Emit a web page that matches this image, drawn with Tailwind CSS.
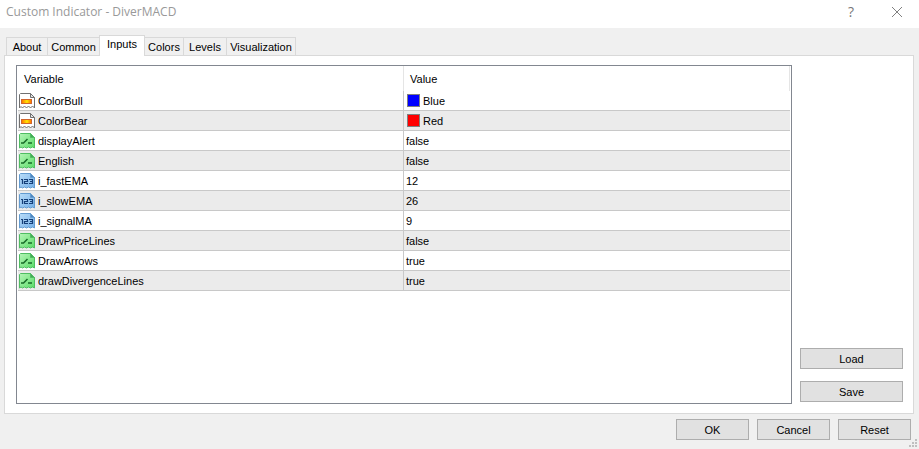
<!-- Custom Indicator dialog -->
<!DOCTYPE html>
<html lang="en">
  <head>
    <meta charset="UTF-8" />
    <meta name="viewport" content="width=device-width, initial-scale=1.0" />
    <script src="https://cdn.jsdelivr.net/npm/@tailwindcss/browser@4"></script>
    <title>Custom Indicator - DiverMACD</title>
  </head>
  <body
    class="min-h-screen flex flex-col bg-[#f0f0f0] text-black text-[11px] leading-4 font-['Liberation_Sans',Arial,sans-serif]"
  >
    <!-- Icon symbols -->
    <svg class="absolute w-0 h-0" aria-hidden="true">
      <defs>
        <linearGradient id="gold">
          <stop offset="0" stop-color="#ff7800" />
          <stop offset="0.55" stop-color="#ffe800" />
          <stop offset="1" stop-color="#ff7800" />
        </linearGradient>
        <linearGradient id="green" x2="1" y2="1">
          <stop offset="0" stop-color="#b5f5b8" />
          <stop offset="1" stop-color="#5cdc68" />
        </linearGradient>
        <linearGradient id="blue" x2="1" y2="1">
          <stop offset="0" stop-color="#b9dcf8" />
          <stop offset="1" stop-color="#75b0e8" />
        </linearGradient>
      </defs>
      <symbol id="icon-color" viewBox="0 0 16 16">
        <path d="M.5 15V1.500L1.500.5H11.500L15.500 4.500V15L13.500 13L11.500 15L9.500 13L7.500 15L5.500 13L3.500 15L2 13.500Z" fill="#fff" stroke="#707070" />
        <path d="M11.500.5V4.500H15.500Z" fill="#e4e4e4" stroke="#707070" />
        <path d="M2 6H13V11H2Z" fill="#d0642c" />
        <path d="M3 7H12V10H3Z" fill="url(#gold)" />
      </symbol>
      <symbol id="icon-bool" viewBox="0 0 16 16">
        <path d="M.5 15V1.500L1.500.5H11.500L15.500 4.500V15L13.500 14L11.500 15L9.500 14L7.500 15L5.500 14L3.500 15L2 14Z" fill="url(#green)" stroke="#4fbd62" />
        <path d="M11.500.5V4.500H15.500Z" fill="#45a858" stroke="#4fbd62" />
        <path d="M2 10H4.500L8.500 6M9 10H13" fill="none" stroke="#176b28" stroke-width="1.500" />
      </symbol>
      <symbol id="icon-int" viewBox="0 0 16 16">
        <path d="M.5 15V1.500L1.500.5H11.500L15.500 4.500V15L13.500 14L11.500 15L9.500 14L7.500 15L5.500 14L3.500 15L2 14Z" fill="url(#blue)" stroke="#629bd0" />
        <path d="M11.500.5V4.500H15.500Z" fill="#4f86bd" stroke="#629bd0" />
        <path d="M2 6.500H3.500V11M5 6.500H8.500V8.500H5.500V10.500H9M10 6.500H13.500V10.500H10M11 8.500H13.500" fill="none" stroke="#153f78" stroke-width="1.200" />
      </symbol>
    </svg>

    <!-- Title Bar -->
    <header class="h-7 bg-white flex items-center justify-between pl-[6px] pr-4 text-[#999999]">
      <h1 class="text-xs font-['Open_Sans','Segoe_UI',sans-serif] pb-1">Custom Indicator - DiverMACD</h1>
      <div class="flex items-center gap-9 pb-1">
        <button aria-label="Help" class="w-2 text-sm text-[#777777] font-['Open_Sans',sans-serif]">?</button>
        <button aria-label="Close">
          <svg class="w-3 h-3" viewBox="0 0 12 12" fill="none" stroke="#808080">
            <path d="M1 1L11 11M11 1L1 11" />
          </svg>
        </button>
      </div>
    </header>

    <main class="grow flex flex-col pl-1 pr-[5px] pt-[7px]">
      <!-- Tabs -->
      <div role="tablist" class="flex items-end pl-[2px] relative">
        <button role="tab" class="w-[42px] h-[18px] border border-b-0 border-[#d9d9d9]">About</button>
        <button role="tab" class="w-[51px] h-[18px] border-t border-[#d9d9d9]">Common</button>
        <button role="tab" aria-selected="true" class="w-[46px] h-[21px] -mb-px pb-1 border border-b-0 border-[#d9d9d9] bg-white">Inputs</button>
        <button role="tab" class="w-[39px] h-[18px] border border-l-0 border-b-0 border-[#d9d9d9]">Colors</button>
        <button role="tab" class="w-[43px] h-[18px] border border-l-0 border-b-0 border-[#d9d9d9]">Levels</button>
        <button role="tab" class="w-[69px] h-[18px] border border-l-0 border-b-0 border-[#d9d9d9]">Visualization</button>
      </div>

      <!-- Inputs Panel -->
      <section class="grow flex gap-2 bg-white border border-[#d9d9d9] pl-[11px] pr-[10px] py-[9px]">
        <div class="grow border border-[#828790] pl-px pr-px">
          <table class="w-full table-fixed border-separate border-spacing-0 text-left">
            <thead>
              <tr class="h-[25px]">
                <th class="w-1/2 p-0 pl-[6px] font-normal border-r border-[#e5e5e5]">Variable</th>
                <th class="p-0 pl-[6px] font-normal border-r border-[#e5e5e5]">Value</th>
              </tr>
            </thead>
            <tbody id="inputRows"></tbody>
          </table>
        </div>
        <div class="w-[103px] shrink-0 flex flex-col justify-end gap-3 pb-[2px]">
          <button class="h-[21px] bg-[#e1e1e1] border border-[#adadad]">Load</button>
          <button class="h-[21px] bg-[#e1e1e1] border border-[#adadad]">Save</button>
        </div>
      </section>
    </main>

    <!-- Dialog Buttons -->
    <footer class="flex justify-end gap-2 pt-[5px] pb-[9px] pr-2 relative">
      <button class="w-[73px] h-[21px] bg-[#e1e1e1] border border-[#adadad]">OK</button>
      <button class="w-[73px] h-[21px] bg-[#e1e1e1] border border-[#adadad]">Cancel</button>
      <button class="w-[73px] h-[21px] bg-[#e1e1e1] border border-[#adadad]">Reset</button>
      <svg class="absolute right-[2px] bottom-[2px] w-2 h-2" viewBox="0 0 8 8" fill="#bfbfbf">
        <path d="M6 0h2v2h-2zM3 3h2v2h-2zM6 3h2v2h-2zM0 6h2v2h-2zM3 6h2v2h-2zM6 6h2v2h-2z" />
      </svg>
    </footer>

    <script>
      const inputs = [
        { icon: "color", name: "ColorBull", value: "Blue", swatch: "bg-[#0000ff]" },
        { icon: "color", name: "ColorBear", value: "Red", swatch: "bg-[#ff0000]" },
        { icon: "bool", name: "displayAlert", value: "false" },
        { icon: "bool", name: "English", value: "false" },
        { icon: "int", name: "i_fastEMA", value: "12" },
        { icon: "int", name: "i_slowEMA", value: "26" },
        { icon: "int", name: "i_signalMA", value: "9" },
        { icon: "bool", name: "DrawPriceLines", value: "false" },
        { icon: "bool", name: "DrawArrows", value: "true" },
        { icon: "bool", name: "drawDivergenceLines", value: "true" },
      ];

      document.getElementById("inputRows").innerHTML = inputs
        .map(
          (row) => `
        <tr class="h-5 even:bg-[#ebebeb]">
          <td class="p-0 pl-px border-r border-b border-[#c8c8c8]">
            <div class="flex items-center gap-[3px]">
              <svg class="w-4 h-4"><use href="#icon-${row.icon}" /></svg>${row.name}
            </div>
          </td>
          <td class="p-0 pl-[2px] border-b border-[#c8c8c8]">
            <div class="flex items-center gap-[3px]">
              ${row.swatch ? `<span class="w-[13px] h-[13px] ml-px border border-[#808080] ${row.swatch}"></span>` : ""}${row.value}
            </div>
          </td>
        </tr>`
        )
        .join("");
    </script>
  </body>
</html>
